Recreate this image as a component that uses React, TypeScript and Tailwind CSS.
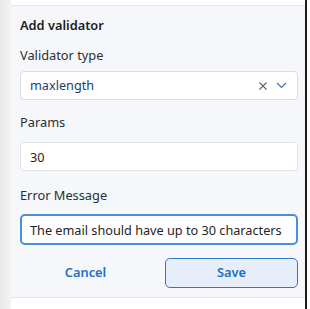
import React from 'react';

export default function App() {
  const [message, setMessage] = React.useState('The email should have up to 30 characters');
  const [params, setParams] = React.useState('30');

  return (
    <div
      className="flex h-[309px] w-[310px] overflow-hidden bg-white"
      style={{ fontFamily: '"Noto Sans", "Open Sans", sans-serif' }}
    >
      {/* left shadow strip */}
      <div className="w-[11px] shrink-0 bg-gradient-to-r from-[#e9e9e9] to-[#f4f4f4]" />
      <div className="flex w-[294px] shrink-0 flex-col">
        <div className="h-[6px] border-b border-[#e3e6eb] bg-white" />
        <section className="flex h-[292px] flex-col border-b border-[#e1e5ec] bg-[#f5f7fa] pl-[9px] pr-[7px]">
          <h2 className="mt-[9px] text-[12.8px] font-semibold leading-[20px] text-[#1a1d21]">
            Add validator
          </h2>
          <label className="mt-[9px] text-[12.8px] leading-[22px] text-[#2b2f33]">Validator type</label>
          <div className="mt-[5px] flex h-[29px] items-center rounded-[4px] border border-[#d9dde3] bg-white pl-[9px] pr-[10px]">
            <span className="flex-1 text-[12.7px] text-[#1c3f66]">maxlength</span>
            <svg width="10" height="10" viewBox="0 0 10 10" className="mr-[8px]">
              <path d="M1.5 1.5 L8.5 8.5 M8.5 1.5 L1.5 8.5" stroke="#5f6368" strokeWidth="1.1" />
            </svg>
            <svg width="11" height="7" viewBox="0 0 11 7">
              <path d="M1 1 L5.5 5.5 L10 1" stroke="#3a6fae" strokeWidth="1.1" fill="none" />
            </svg>
          </div>
          <label className="mt-[11px] text-[12.8px] leading-[22px] text-[#2b2f33]">Params</label>
          <input
            value={params}
            onChange={(e) => setParams(e.target.value)}
            className="mt-[9px] h-[29px] rounded-[4px] border border-[#dfe3e8] bg-white px-[9px] text-[12.7px] text-[#1f2328] outline-none"
          />
          <label className="mt-[13px] text-[12.8px] leading-[22px] text-[#2b2f33]">Error Message</label>
          <input
            value={message}
            onChange={(e) => setMessage(e.target.value)}
            className="mt-[8px] h-[31px] rounded-[5px] border-2 border-[#4a8fdc] bg-white px-[8px] text-[12.7px] text-[#1f2328] outline-none"
          />
          <div className="mt-[13px] flex gap-[14px]">
            <button className="h-[30px] flex-1 text-[12.8px] font-semibold text-[#1a6fc9]">Cancel</button>
            <button className="h-[30px] flex-1 rounded-[5px] border border-[#2a78d0] bg-[#e7eefa] text-[12.8px] font-semibold text-[#1a6fc9]">
              Save
            </button>
          </div>
        </section>
        <div className="flex-1 bg-white" />
      </div>
      <div className="w-[2px] shrink-0 bg-[#1b1b1b]" />
      <div className="flex-1 bg-white" />
    </div>
  );
}
